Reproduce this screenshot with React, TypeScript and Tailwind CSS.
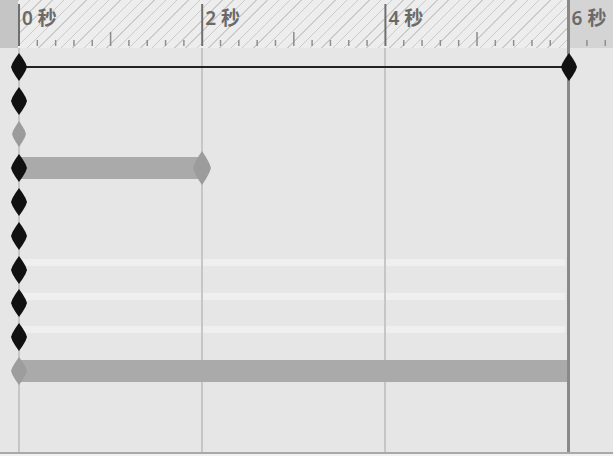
const PX = 91.6;
const x = (t: number) => 19 + t * PX;

const Diamond = ({ at, color = "#111", w = 16, h = 28 }: { at: number; color?: string; w?: number; h?: number }) => (
  <span
    className="absolute top-1/2 z-[3] -translate-y-1/2"
    style={{ left: at - w / 2, width: w, height: h }}
  >
    <svg viewBox="0 0 16 28" width={w} height={h} preserveAspectRatio="none" className="block">
      <polygon
        points="8,0 11.5,5 14.5,10 16,14 14.5,18 11.5,23 8,28 4.5,23 1.5,18 0,14 1.5,10 4.5,5"
        fill={color}
      />
    </svg>
  </span>
);

const Bar = ({ from, to, color = "#aaaaaa" }: { from: number; to: number; color?: string }) => (
  <div
    className="absolute top-1/2 z-[2] h-[22px] -translate-y-1/2"
    style={{ left: from, width: to - from, backgroundColor: color }}
  />
);

const Stripe = () => (
  <div className="absolute left-[19px] top-[6px] z-0 h-[7px] w-[546px] bg-[#efefef]" />
);

const Ruler = () => {
  const ticks: { t: number; kind: "major" | "mid" | "minor" }[] = [];
  for (let i = 0; i <= 32; i++) {
    const t = i / 5;
    if (i % 10 === 0) ticks.push({ t, kind: "major" });
    else if (i % 5 === 0) ticks.push({ t, kind: "mid" });
    else ticks.push({ t, kind: "minor" });
  }
  return (
    <svg className="absolute inset-0" width={613} height={48}>
      {ticks.map(({ t, kind }) => {
        const px = x(t);
        if (t === 6) return null;
        if (kind === "major")
          return <line key={t} x1={px} x2={px} y1={4} y2={46} stroke="#6f6f6f" strokeWidth={2} />;
        if (kind === "mid")
          return <line key={t} x1={px} x2={px} y1={32} y2={46} stroke="#8a8a8a" strokeWidth={1.5} />;
        return <line key={t} x1={px} x2={px} y1={40} y2={46} stroke="#8f8f8f" strokeWidth={1.5} />;
      })}
    </svg>
  );
};

const labels = [0, 2, 4, 6];

export default function App() {
  return (
    <div className="relative h-[456px] w-[613px] overflow-hidden bg-[#e6e6e6] font-['Noto_Sans','Noto_Sans_CJK_SC',sans-serif]">
      {/* header ruler */}
      <div className="relative flex h-[48px]">
        <div className="w-[18px] bg-[#c5c5c5]" />
        <div className="w-[550px] bg-[repeating-linear-gradient(135deg,#cbcbcb_0px,#cbcbcb_1px,#ededed_1px,#ededed_8px)]" />
        <div className="flex-1 bg-[#d4d4d4]" />
        <Ruler />
        {labels.map((s) => (
          <span
            key={s}
            className="absolute top-[5px] text-[19px] font-semibold leading-[26px] text-[#6a6a6a]"
            style={{ left: x(s) + 3 }}
          >
            {s} 秒
          </span>
        ))}
      </div>

      {/* tracks */}
      <div className="relative h-[404px]">
        {[0, 2, 4].map((s) => (
          <div
            key={s}
            className="absolute bottom-0 top-0 z-[1] w-[2px] bg-[#c6c6c6]"
            style={{ left: x(s) - 1 }}
          />
        ))}
        <div className="flex flex-col pt-[2px]">
          <div className="relative h-[33.8px]">
            <div className="absolute left-[19px] top-1/2 z-[2] h-[2px] w-[549px] -translate-y-1/2 bg-[#222]" />
            <Diamond at={x(0)} />
            <Diamond at={x(6)} />
          </div>
          <div className="relative h-[33.8px]">
            <Diamond at={x(0)} />
          </div>
          <div className="relative h-[33.8px]">
            <Diamond at={x(0)} color="#9b9b9b" w={14} h={26} />
          </div>
          <div className="relative h-[33.8px]">
            <Bar from={x(0)} to={x(2)} />
            <Diamond at={x(0)} />
            <Diamond at={x(2)} color="#9c9c9c" w={18} h={34} />
          </div>
          <div className="relative h-[33.8px]">
            <Diamond at={x(0)} />
          </div>
          <div className="relative h-[33.8px]">
            <Diamond at={x(0)} />
          </div>
          <div className="relative h-[33.8px]">
            <Stripe />
            <Diamond at={x(0)} />
          </div>
          <div className="relative h-[33.8px]">
            <Stripe />
            <Diamond at={x(0)} />
          </div>
          <div className="relative h-[33.8px]">
            <Stripe />
            <Diamond at={x(0)} />
          </div>
          <div className="relative h-[33.8px]">
            <Bar from={x(0)} to={x(6)} />
            <Diamond at={x(0)} color="#9d9d9d" />
          </div>
        </div>
      </div>

      <div className="h-[2px] bg-[#a9a9a9]" />
      <div className="h-[2px] bg-[#f2f2f2]" />

      {/* end marker */}
      <div className="absolute left-[567px] top-0 z-[2] h-[452px] w-[3px] bg-[#898989]" />
    </div>
  );
}
